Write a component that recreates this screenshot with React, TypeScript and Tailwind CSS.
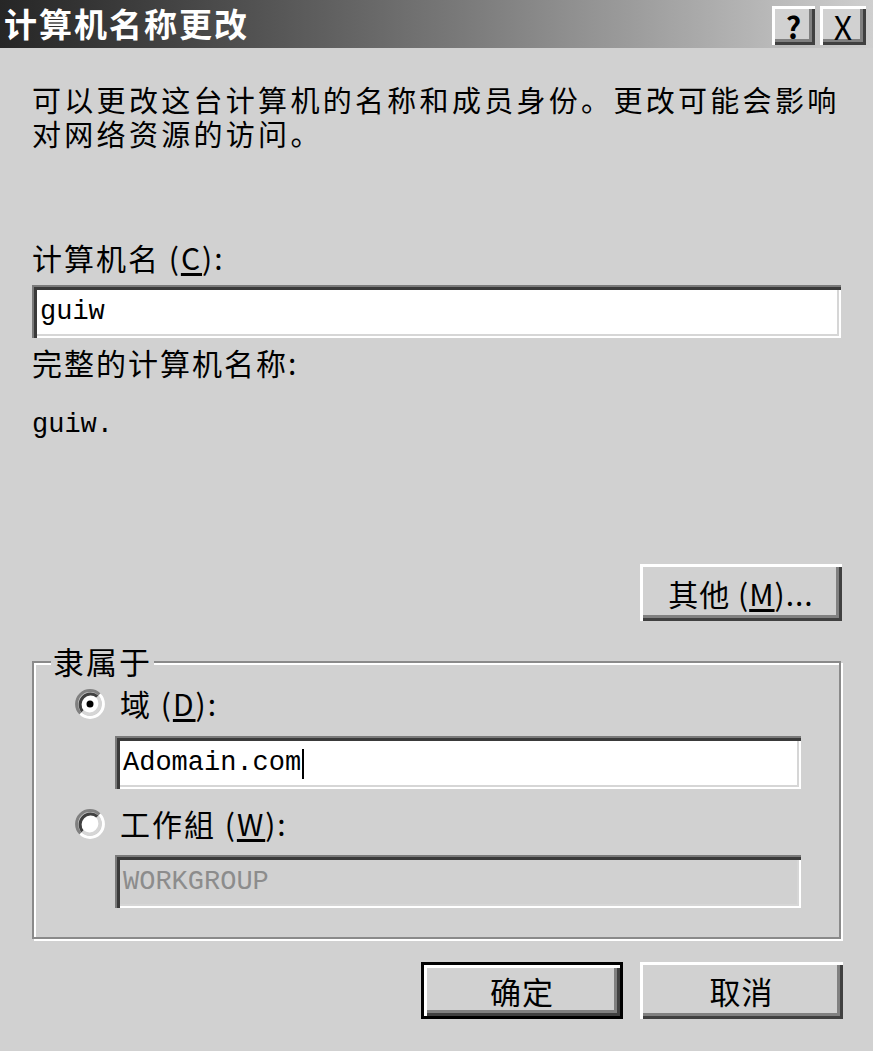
import type { ReactNode } from 'react'

const cjk = "font-['Noto_Sans_CJK_SC',sans-serif]"
const mono = "font-['Liberation_Mono',monospace]"

const raised =
  'shadow-[inset_3px_3px_0_#ffffff,inset_-3px_-3px_0_#404040,inset_-6px_-6px_0_#808080]'
const sunken =
  'shadow-[inset_2px_2px_0_#7a7a7a,inset_5px_5px_0_#3a3a3a,inset_-2px_-2px_0_#ffffff,inset_-4px_-4px_0_#d6d6d6]'

function TitleButton({ children, className }: { children: ReactNode; className?: string }) {
  return (
    <div
      className={`flex h-[39px] w-[43px] items-center justify-center bg-[#d1d1d1] leading-none text-black ${raised} ${className ?? ''}`}
    >
      {children}
    </div>
  )
}

function Radio({ checked }: { checked?: boolean }) {
  return (
    <svg width="30" height="30" viewBox="0 0 30 30" className="shrink-0">
      <circle cx="15" cy="15" r="10" fill="#ffffff" />
      <path d="M5.5 24.5 A13.4 13.4 0 0 1 24.5 5.5" fill="none" stroke="#808080" strokeWidth="3" />
      <path d="M24.5 5.5 A13.4 13.4 0 0 1 5.5 24.5" fill="none" stroke="#ffffff" strokeWidth="3" />
      <path d="M7.6 22.4 A10.5 10.5 0 0 1 22.4 7.6" fill="none" stroke="#404040" strokeWidth="3" />
      <path d="M22.4 7.6 A10.5 10.5 0 0 1 7.6 22.4" fill="none" stroke="#d6d6d6" strokeWidth="3" />
      {checked ? <circle cx="15" cy="15" r="3.5" fill="#000000" /> : null}
    </svg>
  )
}

function Field({ children, disabled }: { children: ReactNode; disabled?: boolean }) {
  return (
    <div
      className={`flex h-[53px] items-center pl-[8px] pt-[2px] text-[27px] ${mono} ${sunken} ${
        disabled ? 'bg-[#d1d1d1] text-[#8c8c8c]' : 'bg-white text-black'
      }`}
    >
      {children}
    </div>
  )
}

function Label({ text, keyChar }: { text: string; keyChar?: string }) {
  return (
    <span className="whitespace-nowrap text-[30px] leading-[33px] tracking-[2px]">
      {text}
      {keyChar ? (
        <>
          {' ('}
          <span className="underline underline-offset-[3px]">{keyChar}</span>
          {'):'}
        </>
      ) : null}
    </span>
  )
}

export default function App() {
  return (
    <div className="h-[1051px] w-[882px] bg-white">
      <div className={`flex h-[1051px] w-[873px] flex-col bg-[#d1d1d1] text-black ${cjk}`}>
        {/* title bar */}
        <div className="flex h-[48px] shrink-0 items-start justify-between bg-linear-to-r from-[#262626] to-[#cfcfcf] pl-[4px] pr-[7px]">
          <span className="mt-[7px] text-[33px] font-bold leading-none tracking-[2px] text-white">计算机名称更改</span>
          <div className="mt-[6px] flex gap-[5px]">
            <TitleButton className="text-[30px] font-bold">?</TitleButton>
            <TitleButton className="w-[46px] text-[32px]">X</TitleButton>
          </div>
        </div>

        <div className="flex flex-col px-[32px]">
          <div className="mt-[34px] flex flex-col whitespace-nowrap text-[29px] tracking-[3.3px]">
            <span className="h-[34px] leading-[34px]">可以更改这台计算机的名称和成员身份。更改可能会影响</span>
            <span className="h-[34px] leading-[34px]">对网络资源的访问。</span>
          </div>

          <div className="mt-[91px]">
            <Label text="计算机名" keyChar="C" />
          </div>
          <div className="mt-[10px]">
            <Field>guiw</Field>
          </div>

          <div className="mt-[8px]">
            <Label text="完整的计算机名称:" />
          </div>
          <p className={`mt-[29px] text-[27px] leading-[33px] ${mono}`}>guiw.</p>

          <div
            className={`mt-[122px] mr-[-1px] flex h-[57px] w-[202px] items-center justify-center self-end ${raised}`}
          >
            <span className="text-[30px] leading-none tracking-[1px]">
              其他 (<span className="underline underline-offset-[3px]">M</span>)...
            </span>
          </div>

          {/* group box */}
          <div className="relative mt-[40px] h-[278px] border-2 border-[#8a8a8a] shadow-[2px_2px_0_#ffffff,inset_2px_2px_0_#ffffff]">
            <span className="absolute -top-[19px] left-[17px] bg-[#d1d1d1] px-[2px] text-[31px] leading-[33px] tracking-[2px]">
              隶属于
            </span>
            <div className="flex flex-col pl-[41px] pr-[38px]">
              <div className="mt-[24px] flex items-center gap-[15px]">
                <Radio checked />
                <Label text="域" keyChar="D" />
              </div>
              <div className="mt-[16px] ml-[40px]">
                <Field>
                  Adomain.com
                  <span className="ml-[1px] inline-block h-[30px] w-[2px] bg-black" />
                </Field>
              </div>
              <div className="mt-[18px] flex items-center gap-[15px]">
                <Radio />
                <Label text="工作組" keyChar="W" />
              </div>
              <div className="mt-[15px] ml-[40px]">
                <Field disabled>WORKGROUP</Field>
              </div>
            </div>
          </div>

          {/* dialog buttons */}
          <div className="mt-[23px] mr-[-2px] flex justify-end gap-[17px]">
            <div className="h-[57px] w-[202px] border-[3px] border-black">
              <div className={`flex h-full w-full items-center justify-center ${raised}`}>
                <span className="text-[31px] leading-none tracking-[1px]">确定</span>
              </div>
            </div>
            <div className={`flex h-[57px] w-[203px] items-center justify-center ${raised}`}>
              <span className="text-[31px] leading-none tracking-[1px]">取消</span>
            </div>
          </div>
        </div>
      </div>
    </div>
  )
}
